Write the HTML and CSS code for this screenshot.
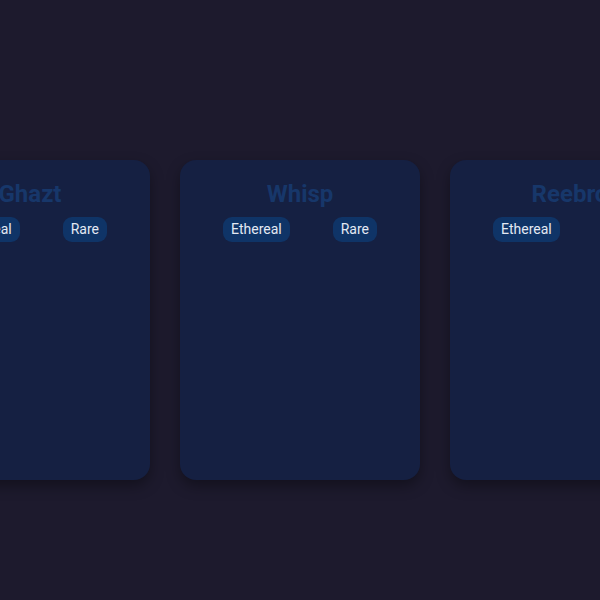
FILE: index.html
```html
<!DOCTYPE html>
<html lang="en">

<head>
  <meta charset="UTF-8">
  <meta name="viewport" content="width=device-width, initial-scale=1.0">
  <title>Spirits</title>
  <link rel="stylesheet" href="styles.css">
</head>

<body>
  <div class="deck">
    <div class="card">
      <h2 class="card-title">Ghazt</h2>
      <div class="tags">
        <span class="tag">Ethereal</span>
        <span class="tag">Rare</span>
      </div>
    </div>

    <div class="card">
      <h2 class="card-title">Whisp</h2>
      <div class="tags">
        <span class="tag">Ethereal</span>
        <span class="tag">Rare</span>
      </div>
    </div>

    <div class="card">
      <h2 class="card-title">Reebro</h2>
      <div class="tags">
        <span class="tag">Ethereal</span>
        <span class="tag">Rare</span>
      </div>
    </div>
  </div>
</body>

</html>
```

FILE: styles.css
```css
* {
  margin: 0;
  padding: 0;
  box-sizing: border-box;
  font-family: Roboto, "Noto Sans", "Liberation Sans", sans-serif;
}

body {
  background-color: #1d1a2d;
  height: 100vh;
  overflow: hidden;
}

/* 卡片横向排列，超出部分两侧裁掉 */
.deck {
  display: flex;
  justify-content: center;
  gap: 30px;
  padding-top: 160px;
}

.card {
  flex: 0 0 240px;
  height: 320px;
  background-color: #152042;
  border-radius: 16px;
  box-shadow: 0 6px 14px rgba(0, 0, 0, 0.35);
  padding-top: 20px;
}

.card-title {
  text-align: center;
  font-size: 24px;
  font-weight: 700;
  color: #17376a;
  line-height: 28px;
  margin-bottom: 9px;
}

.tags {
  display: flex;
  justify-content: space-evenly;
}

.tag {
  height: 25px;
  line-height: 25px;
  padding: 0 8px;
  border-radius: 9px;
  background-color: #0f3467;
  color: #e3e9f3;
  font-size: 14px;
}
```
